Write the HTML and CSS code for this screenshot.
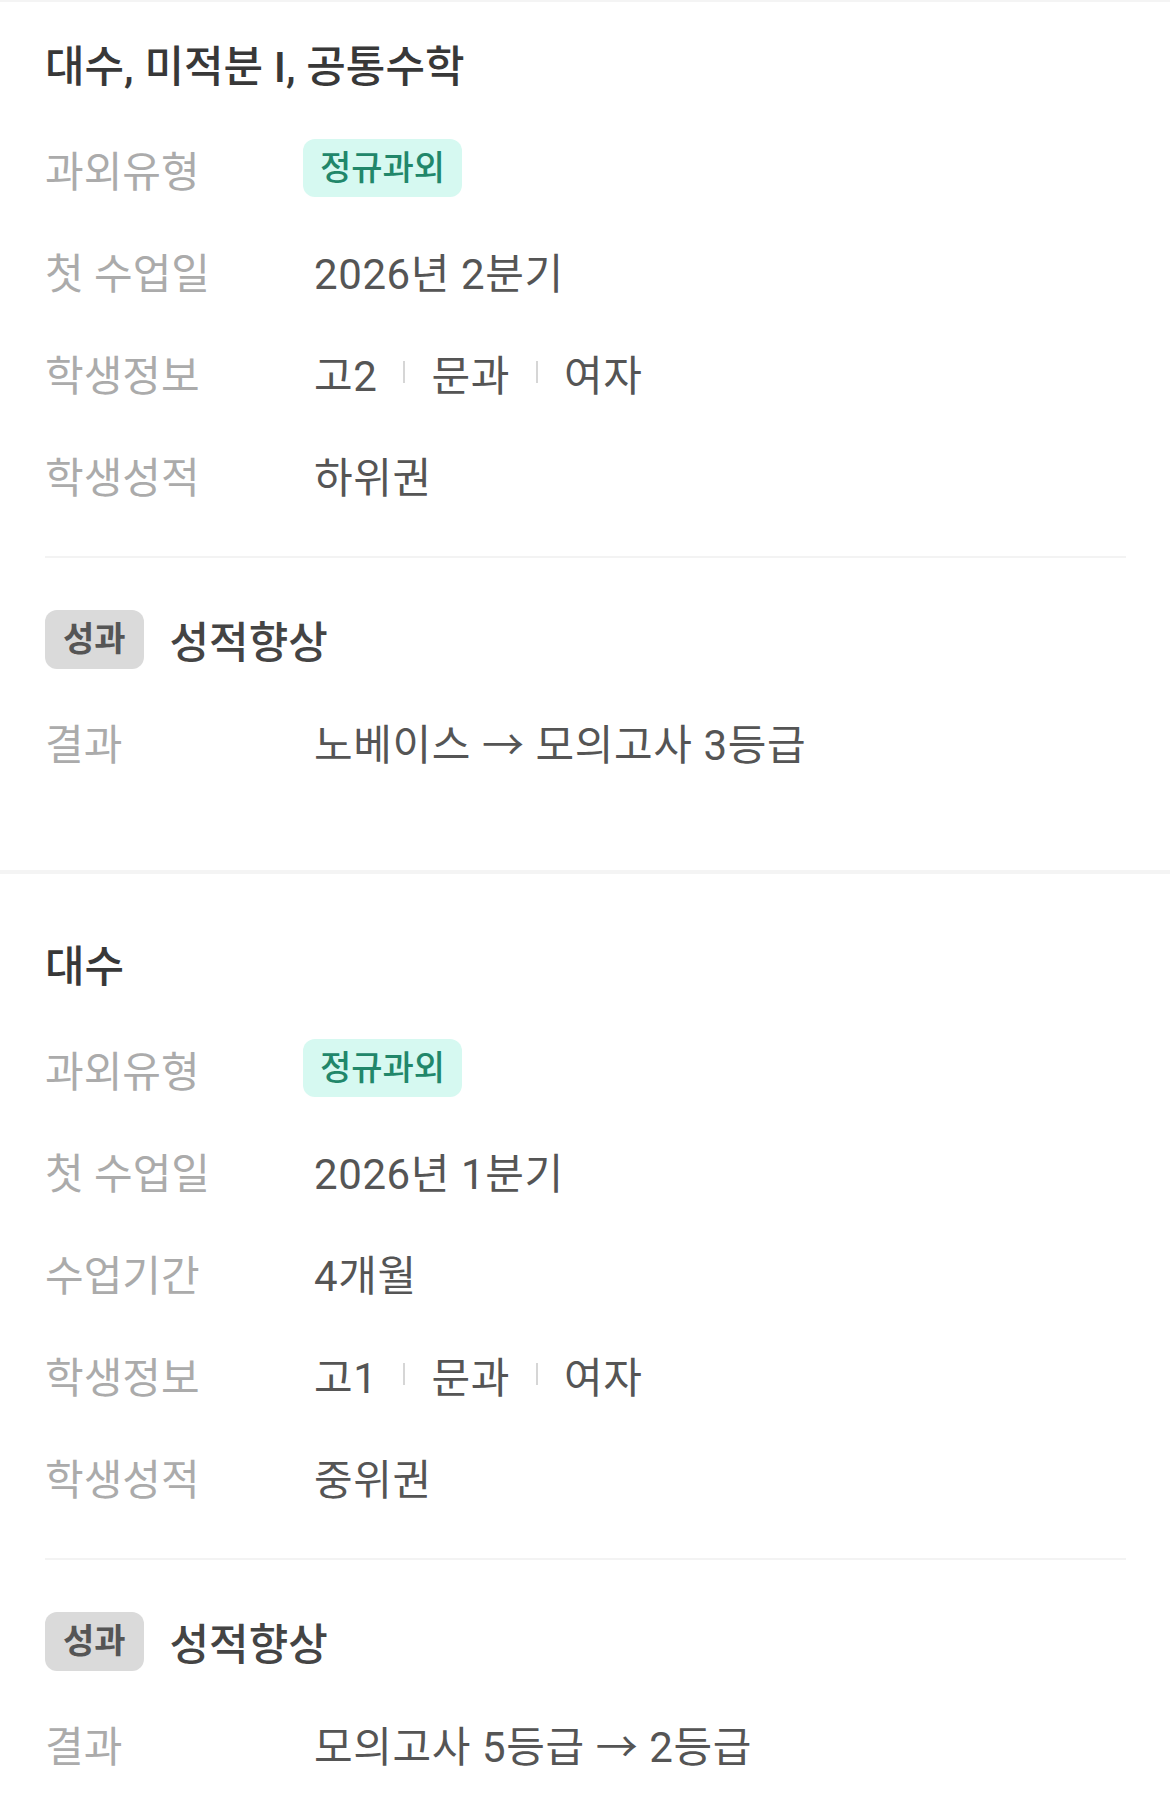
FILE: index.html
```html
<!DOCTYPE html>
<html>
<head>
	<meta charset="utf-8" />
	<link rel="stylesheet" href="styles.css">
</head>
<body>
<div id="lesson_list">

<div class="lesson first">
	<div class="row lesson_title">대수, 미적분 I, 공통수학</div>
	<div class="row"><span class="label">과외유형</span><span class="value"><span class="type_tag">정규과외</span></span></div>
	<div class="row"><span class="label">첫 수업일</span><span class="value">2026년 2분기</span></div>
	<div class="row"><span class="label">학생정보</span><span class="value">고2<i class="sep"></i>문과<i class="sep"></i>여자</span></div>
	<div class="row"><span class="label">학생성적</span><span class="value">하위권</span></div>
	<div class="divider"></div>
	<div class="row"><span class="result_tag">성과</span><span class="result_name">성적향상</span></div>
	<div class="row"><span class="label">결과</span><span class="value">노베이스 → 모의고사 3등급</span></div>
</div>

<div class="lesson">
	<div class="row lesson_title">대수</div>
	<div class="row"><span class="label">과외유형</span><span class="value"><span class="type_tag">정규과외</span></span></div>
	<div class="row"><span class="label">첫 수업일</span><span class="value">2026년 1분기</span></div>
	<div class="row"><span class="label">수업기간</span><span class="value">4개월</span></div>
	<div class="row"><span class="label">학생정보</span><span class="value">고1<i class="sep"></i>문과<i class="sep"></i>여자</span></div>
	<div class="row"><span class="label">학생성적</span><span class="value">중위권</span></div>
	<div class="divider"></div>
	<div class="row"><span class="result_tag">성과</span><span class="result_name">성적향상</span></div>
	<div class="row"><span class="label">결과</span><span class="value">모의고사 5등급 → 2등급</span></div>
</div>

</div>
</body>
</html>
```

FILE: styles.css
```css
body {
	margin: 0;
	background-color: white;
	font-family: Roboto, "Noto Sans CJK KR", sans-serif;
}

#lesson_list {
	width: 1170px;
}

.lesson {
	padding: 41px 44px 78px 45px;
	border-bottom: 4px solid #f4f4f4;
}

.lesson.first {
	padding-top: 13px;
	border-top: 2px solid #f4f4f4;
}

.row {
	height: 102px;
	display: flex;
	align-items: center;
	font-size: 42px;
}

.lesson_title {
	color: #383838;
	font-size: 43px;
	font-weight: 500;
	padding-bottom: 6px;
	box-sizing: border-box;
}

.label {
	width: 269px;
	flex-shrink: 0;
	color: #ababab;
}

.value {
	display: flex;
	align-items: center;
	color: #555555;
	letter-spacing: 0.6px;
}

.sep {
	display: inline-block;
	width: 2px;
	height: 22px;
	margin: 0 26px;
	background-color: #d6d6d6;
}

.type_tag {
	margin-left: -11px;
	padding: 0 17px;
	height: 58px;
	line-height: 58px;
	border-radius: 12px;
	background-color: #d6f9f1;
	color: #21876a;
	font-size: 34px;
	font-weight: 500;
	letter-spacing: 0;
}

.divider {
	height: 2px;
	margin: 31px 0 30px 0;
	background-color: #f3f3f3;
}

.result_tag {
	padding: 0 18px;
	height: 59px;
	line-height: 59px;
	border-radius: 12px;
	background-color: #dadada;
	color: #555555;
	font-size: 34px;
	font-weight: 700;
}

.result_name {
	margin-left: 26px;
	color: #444444;
	font-size: 43px;
	font-weight: 500;
}
```
